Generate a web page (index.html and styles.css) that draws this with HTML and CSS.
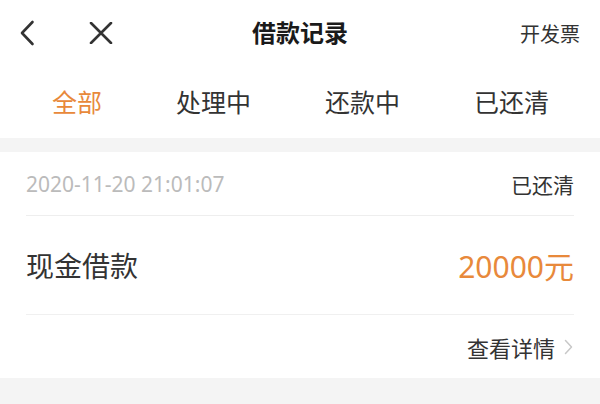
FILE: index.html
```html
<!DOCTYPE html>
<html lang="zh-CN">
<head>
<meta charset="utf-8">
<title>借款记录</title>
<link rel="stylesheet" href="styles.css">
</head>
<body>
<div class="page">
  <header class="nav">
    <div class="nav-left">
      <svg class="icon-back" width="16" height="26" viewBox="0 0 16 26"><path d="M13.5 2 L3 13 L13.5 24" fill="none" stroke="#333" stroke-width="2.6" stroke-linecap="round" stroke-linejoin="round"/></svg>
      <svg class="icon-close" width="24" height="22" viewBox="0 0 24 22"><path d="M2 1 L22 21 M22 1 L2 21" fill="none" stroke="#333" stroke-width="2.6" stroke-linecap="round"/></svg>
    </div>
    <div class="nav-title">借款记录</div>
    <div class="nav-right">开发票</div>
  </header>
  <nav class="tabs">
    <span class="tab active">全部</span>
    <span class="tab">处理中</span>
    <span class="tab">还款中</span>
    <span class="tab">已还清</span>
  </nav>
  <div class="gap"></div>
  <section class="card">
    <div class="row row-top">
      <span class="date">2020-11-20 21:01:07</span>
      <span class="status">已还清</span>
    </div>
    <div class="row row-mid">
      <span class="name">现金借款</span>
      <span class="amount">20000元</span>
    </div>
    <div class="row row-bottom">
      <span class="detail">查看详情</span>
      <svg class="icon-more" width="9" height="16" viewBox="0 0 9 16"><path d="M1.5 1.5 L7.5 8 L1.5 14.5" fill="none" stroke="#c8c8c8" stroke-width="1.5" stroke-linecap="round" stroke-linejoin="round"/></svg>
    </div>
  </section>
  <div class="footer-gap"></div>
</div>
</body>
</html>
```
FILE: styles.css
```css
* { box-sizing: border-box; }
html, body {
  margin: 0;
  padding: 0;
  background: #f4f4f4;
}
body {
  font-family: "Noto Sans", "Noto Sans CJK SC", sans-serif;
  color: #333;
}
.page {
  width: 600px;
  height: 404px;
  overflow: hidden;
  background: #f4f4f4;
}
.nav {
  position: relative;
  height: 66px;
  background: #fff;
  display: flex;
  align-items: center;
  justify-content: space-between;
  padding: 0 20px 0 19px;
}
.nav-left {
  display: flex;
  align-items: center;
  gap: 54px;
}
.icon-back, .icon-close { display: block; }
.nav-title {
  position: absolute;
  left: 0;
  right: 0;
  top: 0;
  line-height: 66px;
  text-align: center;
  font-size: 24px;
  font-weight: 700;
  color: #1a1a1a;
  pointer-events: none;
}
.nav-right {
  font-size: 20px;
  color: #333;
}
.tabs {
  height: 72px;
  background: #fff;
  display: flex;
  align-items: center;
  justify-content: space-between;
  padding: 0 51px 2px 52px;
}
.tab {
  font-size: 25px;
  color: #333;
}
.tab.active { color: #e8893b; }
.gap { height: 14px; }
.card {
  background: #fff;
  padding: 0 26px;
}
.row {
  display: flex;
  align-items: center;
  justify-content: space-between;
}
.row-top {
  height: 64px;
  border-bottom: 1px solid #eeeeee;
}
.date {
  font-size: 21px;
  color: #bbbbbb;
}
.status {
  font-size: 21px;
  color: #333;
}
.row-mid {
  height: 99px;
  border-bottom: 1px solid #f0f0f0;
}
.name {
  font-size: 28px;
  color: #333;
}
.amount {
  font-size: 30px;
  color: #e8893b;
}
.row-bottom {
  height: 63px;
  justify-content: flex-end;
  gap: 9px;
  padding-right: 1px;
}
.detail {
  font-size: 22px;
  color: #333;
}
.icon-more { display: block; }
.footer-gap { height: 30px; }
```
